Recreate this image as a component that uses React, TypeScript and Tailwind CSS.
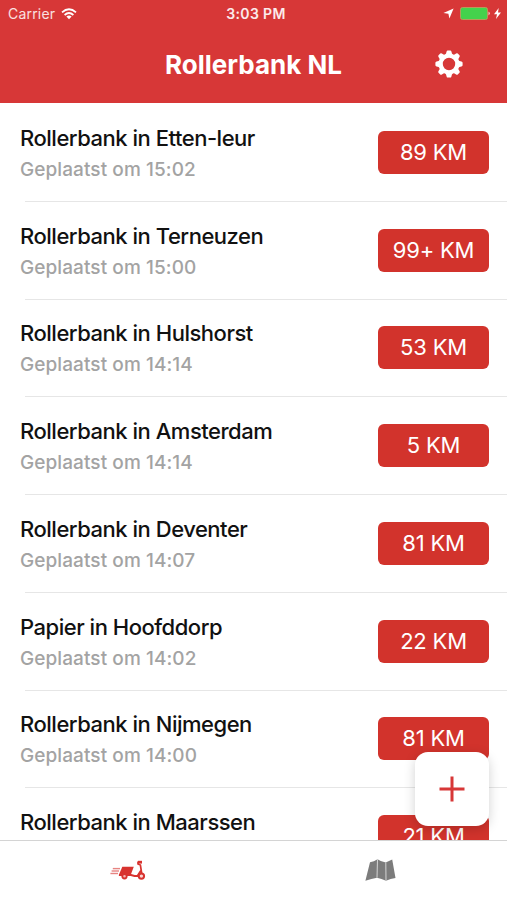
type Row = { title: string; time?: string; distance: string };

const rows: Row[] = [
  { title: 'Rollerbank in Etten-leur', time: '15:02', distance: '89 KM' },
  { title: 'Rollerbank in Terneuzen', time: '15:00', distance: '99+ KM' },
  { title: 'Rollerbank in Hulshorst', time: '14:14', distance: '53 KM' },
  { title: 'Rollerbank in Amsterdam', time: '14:14', distance: '5 KM' },
  { title: 'Rollerbank in Deventer', time: '14:07', distance: '81 KM' },
  { title: 'Papier in Hoofddorp', time: '14:02', distance: '22 KM' },
  { title: 'Rollerbank in Nijmegen', time: '14:00', distance: '81 KM' },
  { title: 'Rollerbank in Maarssen', distance: '21 KM' },
];

const teeth = [0, 45, 90, 135, 180, 225, 270, 315];

function GearIcon() {
  return (
    <svg className="h-7 w-7" viewBox="-14 -14 28 28" fill="#fff">
      <circle r="8.2" fill="none" stroke="#fff" strokeWidth="4" />
      {teeth.map((angle) => (
        <path
          key={angle}
          transform={`rotate(${angle})`}
          d="M-4.2-9 Q-2.6-10.2-2.4-12.4 Q-2.2-13.6-1.2-13.6 H1.2 Q2.2-13.6 2.4-12.4 Q2.6-10.2 4.2-9Z"
        />
      ))}
    </svg>
  );
}

function WifiIcon() {
  return (
    <svg className="h-[12px] w-[16px]" viewBox="0 0 16 12" fill="none" stroke="#fff" strokeWidth="1.8">
      <path d="M1 4.3 Q8-1.9 15 4.3" />
      <path d="M3.6 7 Q8 3.1 12.4 7" />
      <path d="M8 11.2 L5.4 8.5 Q8 6.5 10.6 8.5Z" fill="#fff" stroke="none" />
    </svg>
  );
}

function StatusBar() {
  return (
    <div className="grid h-[27px] grid-cols-3 items-center pr-[6px] pl-[8px] text-[14px] text-white">
      <div className="flex items-center gap-[6px]">
        <span className="tracking-[0.2px] text-white/85">Carrier</span>
        <WifiIcon />
      </div>
      <div className="pl-[3px] text-center text-[14px] font-semibold tracking-[0.35px] whitespace-nowrap text-white/90">3:03 PM</div>
      <div className="flex items-center justify-end">
        <svg className="mr-[6px] h-[11px] w-[11px]" viewBox="0 0 11 11" fill="#fff">
          <path d="M10.6.4 6.4 10.6 5.4 5.8.4 5Z" />
        </svg>
        <svg className="h-[13px] w-[31px]" viewBox="0 0 31 13">
          <rect x=".5" y=".5" width="27" height="12" rx="2" fill="#44d24c" stroke="#b99a5a" />
          <path d="M28.6 4.6 Q30.8 6.5 28.6 8.4Z" fill="#fff" />
        </svg>
        <svg className="ml-[3px] h-[11px] w-[7px]" viewBox="0 0 7 11" fill="#fff">
          <path d="M4.7 0 0 6.3H3L2 11 7 4.5H4Z" />
        </svg>
      </div>
    </div>
  );
}

function ScooterIcon() {
  return (
    <svg className="h-[20px] w-[36px]" viewBox="0 0 36 20" fill="none" stroke="#d8332f">
      <g strokeWidth="1.4" opacity=".6">
        <path d="M2.8 8.6H10" />
        <path d="M1.6 11H9" />
        <path d="M.4 13.5H8" />
      </g>
      <path d="M12.3 6.8H23.8L20.5 15.4H8.6Z" fill="#d8332f" stroke="none" />
      <path d="M9 15H21L24.5 16H27.5L31 10.5" strokeWidth="2" />
      <path d="M28 1.6V4L30.4 5L32 15.5" strokeWidth="1.7" />
      <path d="M28 .8H32V3.6H28Z" fill="#d8332f" stroke="none" />
      <circle cx="14.5" cy="16.3" r="2.2" fill="#f3b5b2" strokeWidth="1.8" />
      <circle cx="31.4" cy="16.1" r="2.7" fill="#f9d5d3" strokeWidth="2" />
    </svg>
  );
}

function MapIcon() {
  return (
    <svg className="h-[22px] w-[31px]" viewBox="0 0 31 22">
      <path d="M5 3.2Q9 2.6 12.5.3 16 2.8 20.8 3.6L27.2.6 30.5 18.9Q25.5 19.3 21 21.7 16.5 19.5 12 18.7 6.5 19.5.4 21.7Z" fill="#7c7c7c" />
      <path d="M12.5.3 12 18.7M20.8 3.6 21 21.7" stroke="#d5d5d5" strokeWidth="1" fill="none" />
    </svg>
  );
}

export default function App() {
  return (
    <div className="relative flex h-[900px] w-[507px] flex-col overflow-hidden bg-white font-['Inter','Liberation_Sans',sans-serif] [font-variant-ligatures:none]">
      <header className="h-[103px] shrink-0 bg-[#d73737]">
        <StatusBar />
        <div className="grid h-[73px] grid-cols-[1fr_auto_1fr] items-center">
          <h1 className="col-start-2 pt-[2px] text-[26px] font-bold whitespace-nowrap text-white">Rollerbank NL</h1>
          <button className="mr-[44.5px] justify-self-end" aria-label="Instellingen">
            <GearIcon />
          </button>
        </div>
      </header>

      <main className="min-h-0 flex-1 overflow-hidden pt-[0.75px]">
        {rows.map((row) => (
          <div key={row.title} className="h-[97.75px]">
            <div className="flex h-[97px] items-center justify-between pr-[18px] pl-[20px]">
              <div className="h-[65px] pt-[3px] whitespace-nowrap">
                <div className="text-[22px] leading-[30px] font-medium tracking-[-0.48px] text-[#111]">{row.title}</div>
                {row.time && (
                  <div className="mt-[2px] text-[19px] leading-[30px] font-medium tracking-[0.08px] text-[#a3a3a3]">
                    Geplaatst om {row.time}
                  </div>
                )}
              </div>
              <div className="flex h-[43px] w-[111px] items-center justify-center rounded-[6px] bg-[#d2332c] text-[22px] tracking-[-0.2px] text-white">
                {row.distance}
              </div>
            </div>
            <div className="ml-[25px] h-px bg-[#e6e6e6]" />
          </div>
        ))}
      </main>

      <nav className="grid h-[60.5px] shrink-0 grid-cols-2 border-t border-[#d4d4d4] bg-white">
        <div className="flex justify-center pt-[19px] pl-[2px]">
          <ScooterIcon />
        </div>
        <div className="flex justify-center pt-[18px]">
          <MapIcon />
        </div>
      </nav>

      <button
        className="absolute top-[752px] left-[415px] flex h-[74px] w-[74px] items-center justify-center rounded-[13px] bg-white shadow-[0_3px_12px_rgba(0,0,0,0.18)]"
        aria-label="Toevoegen"
      >
        <svg className="h-[26px] w-[26px]" viewBox="0 0 26 26" stroke="#d73737" strokeWidth="3">
          <path d="M13 .5V25.5M.5 13H25.5" />
        </svg>
      </button>
    </div>
  );
}
